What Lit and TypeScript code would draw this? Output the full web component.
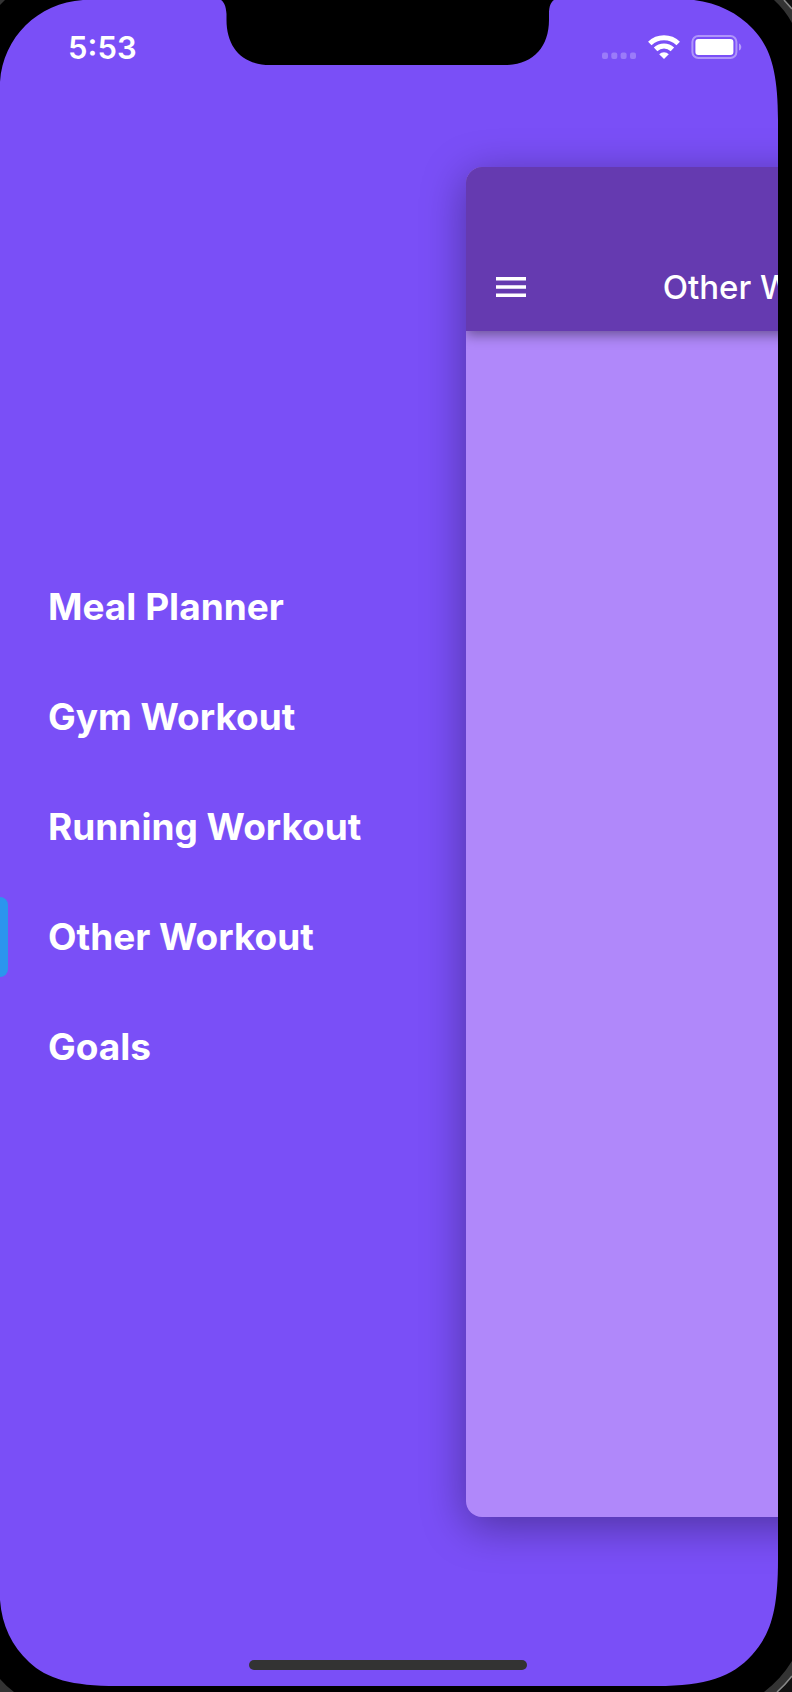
import { LitElement, html, css } from "lit";
import { customElement, state } from "lit/decorators.js";
import { classMap } from "lit/directives/class-map.js";

const SECTIONS = [
  "Meal Planner",
  "Gym Workout",
  "Running Workout",
  "Other Workout",
  "Goals",
];

@customElement("status-bar")
class StatusBar extends LitElement {
  static styles = css`
    :host {
      display: grid;
      grid-template-columns: 1fr 333px 1fr;
      height: 100px;
      padding-right: 4px;
      color: #fff;
    }
    .time {
      padding: 28px 0 0 68px;
      font-size: 31px;
      line-height: 40px;
      font-weight: 600;
    }
    .notch {
      display: block;
    }
    .icons {
      display: flex;
      justify-content: flex-end;
      align-items: center;
      height: 24px;
      padding: 35px 32px 0 0;
      gap: 11px;
    }
    svg {
      display: block;
      flex: none;
    }
  `;

  render() {
    return html`
      <div class="time">5:53</div>
      <svg class="notch" width="333" height="66" viewBox="0 0 333 66" aria-hidden="true">
        <path
          d="M0 0C3 2 5 6 5.500 14V20C5.500 47 21 65 49 65H284C312 65 328 47 328 20V14C328 6 330 2 333 0Z"
          fill="#000"
        />
      </svg>
      <div class="icons">
        <svg width="36" height="24" viewBox="0 0 36 24" role="img" aria-label="No signal">
          <g fill="#fff" fill-opacity=".25">
            <rect x="1" y="17.5" width="6" height="6.5" rx="2" />
            <rect x="10.3" y="17.5" width="6" height="6.5" rx="2" />
            <rect x="19.6" y="17.5" width="6" height="6.5" rx="2" />
            <rect x="29" y="17.5" width="6" height="6.5" rx="2" />
          </g>
        </svg>
        <svg width="32" height="24" viewBox="0 0 32 24" role="img" aria-label="Wi-Fi">
          <g fill="none" stroke="#fff" stroke-width="5">
            <path d="M1.8 8.5A20.5 20.5 0 0 1 30.2 8.5" />
            <path d="M7.6 14.4A12.2 12.2 0 0 1 24.4 14.4" />
          </g>
          <path d="M16 24L11.2 19.2A6.8 6.8 0 0 1 20.8 19.2Z" fill="#fff" />
        </svg>
        <svg width="51" height="24" viewBox="0 0 51 24" role="img" aria-label="Battery full">
          <rect
            x="1.4" y="1" width="44" height="22" rx="6"
            fill="none" stroke="#fff" stroke-opacity=".4" stroke-width="2"
          />
          <rect x="4.4" y="4" width="38" height="16" rx="3" fill="#fff" />
          <path d="M48 8.500C51 9.500 51 14.500 48 15.500Z" fill="#fff" fill-opacity=".45" />
        </svg>
      </div>
    `;
  }
}

@customElement("section-screen")
class SectionScreen extends LitElement {
  static properties = { heading: { type: String } };
  declare heading: string;

  static styles = css`
    :host {
      display: flex;
      flex-direction: column;
      border-radius: 16px;
      background: #b088fa;
      box-shadow: 0 9px 44px rgba(0, 0, 0, 0.36);
      overflow: hidden;
    }
    .bar {
      display: grid;
      grid-template-columns: 90px 1fr 90px;
      align-items: center;
      height: 89px;
      padding-top: 75px;
      background: #653ab0;
      color: #fff;
      box-shadow: 0 4px 12px rgba(0, 0, 0, 0.4);
    }
    .toggle {
      display: grid;
      place-items: center;
      width: 90px;
      height: 89px;
      padding: 0;
      border: 0;
      background: none;
      color: inherit;
      cursor: pointer;
    }
    .title {
      margin: 0;
      font-size: 33px;
      line-height: 40px;
      font-weight: 500;
      text-align: center;
      white-space: nowrap;
    }
  `;

  render() {
    return html`
      <header class="bar">
        <button class="toggle" type="button" aria-label="Toggle menu">
          <svg width="30" height="20" viewBox="0 0 30 20" aria-hidden="true">
            <path d="M0 0H30V3.4H0ZM0 8.3H30V11.7H0ZM0 16.6H30V20H0Z" fill="currentColor" />
          </svg>
        </button>
        <h1 class="title">${this.heading}</h1>
      </header>
    `;
  }
}

@customElement("app-root")
class AppRoot extends LitElement {
  @state() private active = "Other Workout";

  static styles = css`
    :host {
      display: block;
      font-family: Inter, "Liberation Sans", sans-serif;
    }
    .device {
      position: relative;
      display: grid;
      box-sizing: border-box;
      min-height: 100vh;
      padding: 0 14px 6px 0;
      background: #000;
      overflow: hidden;
    }
    .screen {
      display: flex;
      flex-direction: column;
      min-width: 0;
      background: #7a4ff7;
      overflow: hidden;
    }
    .body {
      flex: 1;
      display: grid;
      grid-template-columns: 466fr 312fr;
    }
    .menu {
      display: flex;
      flex-direction: column;
      justify-content: center;
      gap: 30px;
      min-width: 0;
      padding-bottom: 100px;
    }
    .item {
      display: flex;
      align-items: center;
      gap: 40px;
      height: 80px;
      color: #fff;
      font-size: 37px;
      line-height: 44px;
      font-weight: 700;
      text-decoration: none;
      white-space: nowrap;
    }
    .item::before {
      content: "";
      width: 8px;
      height: 80px;
      border-radius: 0 8px 8px 0;
    }
    .item.active::before {
      background: #2b95ee;
    }
    .stage {
      display: flex;
      min-width: 0;
      padding: 67px 0 137px;
    }
    .page {
      flex: none;
      width: 200%;
    }
    .home {
      display: flex;
      justify-content: center;
      height: 26px;
      padding: 6px 2px 0 0;
    }
    .handle {
      width: 278px;
      height: 10px;
      border-radius: 5px;
      background: #333;
    }
    .corner {
      position: absolute;
      display: block;
      pointer-events: none;
    }
    .tl { top: 0; left: 0; }
    .tr { top: 0; right: 0; }
    .bl { bottom: 0; left: 0; }
    .br { bottom: 0; right: 0; }
  `;

  private select(event: Event, name: string) {
    event.preventDefault();
    this.active = name;
  }

  render() {
    return html`
      <div class="device">
        <div class="screen">
          <status-bar></status-bar>
          <div class="body">
            <nav class="menu" aria-label="Sections">
              ${SECTIONS.map(
                (name) => html`<a
                  class=${classMap({ item: true, active: name === this.active })}
                  href="#"
                  @click=${(e: Event) => this.select(e, name)}
                  >${name}</a
                >`
              )}
            </nav>
            <main class="stage">
              <section-screen class="page" .heading=${this.active}></section-screen>
            </main>
          </div>
          <div class="home"><div class="handle"></div></div>
        </div>

        <svg class="corner tl" width="84" height="84" viewBox="0 0 84 84" aria-hidden="true">
          <path d="M0 0H83C38 3 3 37 0 82Z" fill="#000" />
          <path d="M0 0H5L0 5Z" fill="#333" />
        </svg>
        <svg class="corner tr" width="100" height="120" viewBox="0 0 100 120" aria-hidden="true">
          <path d="M2 0C26 3 46 13 61 29C78 47 86 70 86 120H100V0Z" fill="#000" />
          <path d="M82 0Q93 10 100 23V0Z" fill="#333" />
          <path d="M93 0L100 8V0Z" fill="#111" />
          <path d="M92 0L100 9" stroke="#888" stroke-width="1.5" />
        </svg>
        <svg class="corner bl" width="120" height="92" viewBox="0 0 120 92" aria-hidden="true">
          <path d="M0 0C2 26 12 46 29 62C47 79 72 86 117 86V92H0Z" fill="#000" />
          <path d="M0 79Q6 86 14 92H0Z" fill="#333" />
        </svg>
        <svg class="corner br" width="136" height="132" viewBox="0 0 136 132" aria-hidden="true">
          <path d="M122 0C122 50 115 74 96 95C76 117 50 126 1 126V132H136V0Z" fill="#000" />
          <path d="M136 101Q125 119 108 132H136Z" fill="#333" />
          <path d="M136 116Q129 125 121 132H136Z" fill="#111" />
          <path d="M136 116Q129 125 121 132" fill="none" stroke="#888" stroke-width="1.5" />
        </svg>
      </div>
    `;
  }
}
